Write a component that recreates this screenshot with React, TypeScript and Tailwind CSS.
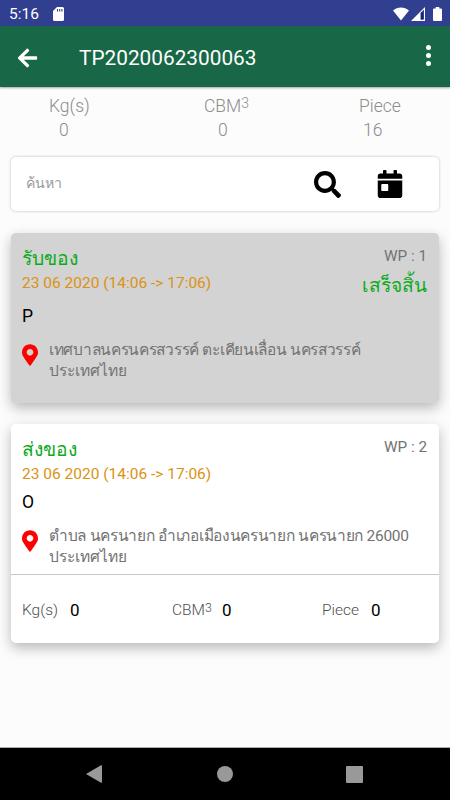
import { FaArrowLeft, FaSearch, FaCalendarDay, FaMapMarkerAlt } from 'react-icons/fa';

interface Job {
  title: string;
  time: string;
  code: string;
  wp: number;
  address: string[];
  done: boolean;
}

const jobs: Job[] = [
  {
    title: 'รับของ',
    time: '23 06 2020 (14:06 -> 17:06)',
    code: 'P',
    wp: 1,
    address: ['เทศบาลนครนครสวรรค์ ตะเคียนเลื่อน นครสวรรค์', 'ประเทศไทย'],
    done: true
  },
  {
    title: 'ส่งของ',
    time: '23 06 2020 (14:06 -> 17:06)',
    code: 'O',
    wp: 2,
    address: ['ตำบล นครนายก อำเภอเมืองนครนายก นครนายก 26000', 'ประเทศไทย'],
    done: false
  }
];

function Cbm() {
  return (
    <>
      CBM<span className="relative -top-[0.28em] text-[0.8em] leading-none">3</span>
    </>
  );
}

function StatusBar() {
  return (
    <div className="flex h-[26px] shrink-0 items-center bg-[#303f8f] pl-[9px] pr-2 pt-0.5 text-white">
      <span className="w-11 text-[15.5px] leading-5">5:16</span>
      <svg className="mb-px h-[14px] w-[11px]" viewBox="0 0 11 14">
        <path d="M4 0h5.5A1.5 1.5 0 0 1 11 1.500V12.500A1.500 1.500 0 0 1 9.500 14h-8A1.500 1.500 0 0 1 0 12.500V4z" fill="#fff" />
        <path d="M4.500 2v2.500M6.700 2v2.500M8.900 2v2.500" stroke="#303f8f" strokeWidth="1.100" />
      </svg>
      <svg className="mb-px ml-auto h-[14px] w-4" viewBox="0 0 16 14">
        <path d="M8 13.500 0 3.600C4.600-.4 11.400-.4 16 3.600z" fill="#fff" />
      </svg>
      <svg className="mb-px ml-0.5 h-[14px] w-[14px]" viewBox="0 0 14 14">
        <path d="M0 14 14 0v14z" fill="#fff" />
        <path d="M9.500 6 13 2.500V12.500H9.500z" fill="#303f8f" />
        <path d="M10 5.500h2v7h-2z" fill="#12208a" />
      </svg>
      <svg className="mb-px ml-2 h-[14px] w-[9px]" viewBox="0 0 9 14">
        <path d="M2.700 0h3.600v1.400H8q1 0 1 1V13q0 1-1 1H1q-1 0-1-1V2.400q0-1 1-1h1.700z" fill="#fff" />
      </svg>
    </div>
  );
}

function JobCard({ job }: { job: Job }) {
  return (
    <div className={`mx-[11px] rounded-[5px] shadow-[0_5px_13px_rgba(0,0,0,0.27)] ${job.done ? 'h-[170px] bg-[#d3d3d3]' : 'h-[219px] bg-white'}`}>
      <div className="flex justify-between pl-[11px] pr-3 pt-3">
        <div>
          <div className="h-[27px] text-[19.3px] leading-[27px] text-[#0cab1c]">{job.title}</div>
          <div className="h-5 text-[15.5px] leading-[22px] text-[#dc9212]">{job.time}</div>
          <div className={`h-6 text-[17.5px] leading-[25px] text-black ${job.done ? 'mt-3' : 'mt-[7px]'}`}>{job.code}</div>
        </div>
        <div className="text-right">
          <div className="text-[15.3px] leading-[22px] text-[#737373]">WP : {job.wp}</div>
          {job.done && <div className="mt-[5px] text-[19.2px] leading-7 text-[#0cab1c]">เสร็จสิ้น</div>}
        </div>
      </div>
      <div className="mt-3 flex pl-[11px]">
        <FaMapMarkerAlt className="mt-1 h-[22px] w-4 text-[#ff0000]" />
        <div className="ml-[11px] text-[15.5px] leading-[21px] text-[#737373]">
          <div className="whitespace-nowrap tracking-[-0.3px]">{job.address[0]}</div>
          <div className="whitespace-nowrap">{job.address[1]}</div>
        </div>
      </div>
      {!job.done && (
        <div className="mt-[6px] flex h-[69px] items-center border-t border-[#c8c8c8] pl-[11px] pt-1 text-[15.5px] text-[#505050]">
          <div className="flex w-[150px] items-center">
            <span className="w-12 font-light">Kg(s)</span>
            <span className="text-[17px] text-black">0</span>
          </div>
          <div className="flex w-[150px] items-center">
            <span className="w-[50px] whitespace-nowrap font-light"><Cbm /></span>
            <span className="text-[17px] text-black">0</span>
          </div>
          <div className="flex items-center">
            <span className="w-[49px] font-light">Piece</span>
            <span className="text-[17px] text-black">0</span>
          </div>
        </div>
      )}
    </div>
  );
}

export default function App() {
  return (
    <div className="flex h-[800px] w-[450px] flex-col overflow-hidden bg-[#fcfcfc] font-['Roboto','Noto_Sans',sans-serif]">
      <StatusBar />

      {/* Toolbar */}
      <header className="flex h-[61px] shrink-0 items-center bg-[#186847] pl-[17px] pr-[19px] text-white shadow-[0_1px_2px_rgba(0,0,0,0.35)]">
        <FaArrowLeft className="mt-0.5 h-[22px] w-[21px]" />
        <h1 className="ml-[41px] mt-[3px] text-[20.8px] leading-7">TP2020062300063</h1>
        <div className="mb-0.5 ml-auto flex flex-col gap-[3px]">
          <span className="h-[5px] w-[5px] rounded-full bg-white" />
          <span className="h-[5px] w-[5px] rounded-full bg-white" />
          <span className="h-[5px] w-[5px] rounded-full bg-white" />
        </div>
      </header>

      {/* Totals */}
      <div className="flex h-[70px] shrink-0 pt-[7px] text-[17.5px] leading-[24px] text-[#8c8c8c]">
        <div className="w-[155px] pl-[49px] font-light">
          <div className="h-6">Kg(s)</div>
          <div className="pl-[10px]">0</div>
        </div>
        <div className="w-[155px] pl-[49px] font-light">
          <div className="h-6 whitespace-nowrap"><Cbm /></div>
          <div className="pl-[14px]">0</div>
        </div>
        <div className="pl-[49px] font-light">
          <div className="h-6">Piece</div>
          <div className="pl-1">16</div>
        </div>
      </div>

      {/* Search */}
      <div className="mx-[11px] flex h-[54px] shrink-0 items-center rounded-[5px] bg-white pl-[15px] shadow-[0_0_3px_rgba(0,0,0,0.25)]">
        <span className="w-[288px] text-[14.2px] text-[#999999]">ค้นหา</span>
        <FaSearch className="h-[27px] w-[27px]" />
        <FaCalendarDay className="ml-[35px] h-7 w-7" />
      </div>

      <div className="mt-[22px] flex flex-col gap-[21px]">
        {jobs.map(job => <JobCard key={job.wp} job={job} />)}
      </div>

      {/* Navigation bar */}
      <nav className="mt-auto flex h-[53px] shrink-0 items-center justify-between border-t border-[#aaaaaa] bg-black pl-[86px] pr-[87px]">
        <svg className="h-[18px] w-4" viewBox="0 0 16 18">
          <path d="M0 9 15 .3q1-.4 1 .6v16.200q0 1-1 .6z" fill="#999" />
        </svg>
        <span className="ml-px h-4 w-4 rounded-full bg-[#999999]" />
        <span className="h-[17px] w-[17px] rounded-[1px] bg-[#999999]" />
      </nav>
    </div>
  );
}
